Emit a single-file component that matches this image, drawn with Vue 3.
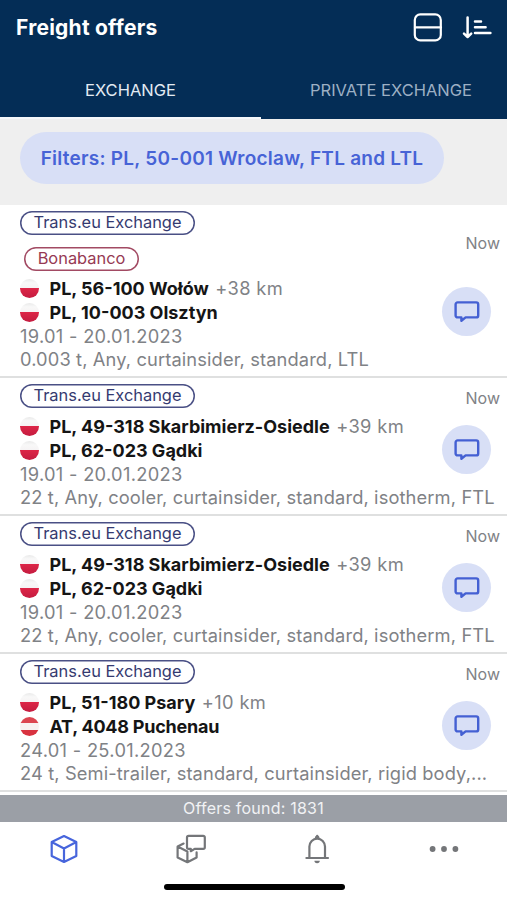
<template>
  <div class="screen">
    <header class="header">
      <div class="title-bar">
        <h1>Freight offers</h1>
        <div class="actions">
          <svg class="icon-layout" viewBox="0 0 30 30">
            <rect x="1.8" y="1.4" width="26" height="26" rx="5.5" />
            <path d="M2 14.4h26" />
          </svg>
          <svg class="icon-sort" viewBox="0 0 32 26">
            <path d="M7.6 2.5v18.6M4 18.6l3.6 3.4 3.6-3.4" />
            <path d="M15 6.4h6M15 12.2h10.6M15 18h15.4" />
          </svg>
        </div>
      </div>
      <div class="tabs">
        <button
          v-for="tab in tabs"
          :key="tab"
          :class="['tab', { active: tab === activeTab }]"
          @click="activeTab = tab"
        >{{ tab }}</button>
      </div>
    </header>

    <div class="filters">
      <button class="filter-chip"><span>Filters: PL, 50-001 Wroclaw, FTL and LTL</span></button>
    </div>

    <main class="offers">
      <article v-for="offer in offers" :key="offer.id" class="offer">
        <div class="offer-top">
          <div class="offer-main">
            <div class="badges">
              <span class="badge">Trans.eu Exchange</span>
              <span v-if="offer.company" class="badge company">{{ offer.company }}</span>
            </div>
            <div v-for="(place, i) in offer.places" :key="i" class="place">
              <span :class="['flag', place.country]"></span>
              <strong>{{ place.name }}</strong>
              <span v-if="place.distance" class="distance">{{ place.distance }}</span>
            </div>
            <div class="dates">{{ offer.dates }}</div>
          </div>
          <div class="offer-side">
            <span class="time">Now</span>
            <button class="chat" aria-label="Chat">
              <svg viewBox="0 0 26 24">
                <path d="M3.6 2.4h18.6a2 2 0 0 1 2 2v11a2 2 0 0 1-2 2H11.6L7.4 20.8v-3.4H3.6a2 2 0 0 1-2-2v-11a2 2 0 0 1 2-2z" />
              </svg>
            </button>
          </div>
        </div>
        <p class="details">{{ offer.details }}</p>
      </article>
    </main>

    <div class="summary"><span>Offers found: 1831</span></div>

    <nav class="bottom-nav">
      <div class="nav-items">
        <a class="nav-item active">
          <svg viewBox="0 0 30 30">
            <path d="M15 2l12.3 6.1v14L15 28 2.7 22.1v-14zM2.7 8.1L15 14.5l12.3-6.4M15 14.5V28" />
          </svg>
        </a>
        <a class="nav-item">
          <svg viewBox="0 0 30 30">
            <path d="M12.6 1.9h14.6a1.6 1.6 0 0 1 1.6 1.6v9.8a1.6 1.6 0 0 1-1.6 1.6H18.6l-3.8 2.3v-2.3h-2.2a1.6 1.6 0 0 1-1.6-1.6V3.5a1.6 1.6 0 0 1 1.6-1.6z" />
            <path d="M7.6 9.6L1.6 12.6v10.8l9.8 4.8 9.2-4.8v-5M1.6 12.6l9.8 4.8V28.2" />
          </svg>
        </a>
        <a class="nav-item">
          <svg viewBox="0 0 30 30">
            <path d="M4.4 24h21.6M7.4 24V12.6a7.8 8 0 0 1 15.6 0V24M15.2 4V1.8" />
            <path class="solid" d="M12.4 26.8h5.4a2.7 2.4 0 0 1-5.4 0zM12.8 4.6a2.4 3 0 0 1 4.8 0z" />
          </svg>
        </a>
        <a class="nav-item">
          <svg viewBox="0 0 30 30">
            <g class="solid">
              <circle cx="3.6" cy="15" r="2.9" />
              <circle cx="15" cy="15" r="2.9" />
              <circle cx="26.4" cy="15" r="2.9" />
            </g>
          </svg>
        </a>
      </div>
      <div class="home-indicator"></div>
    </nav>
  </div>
</template>

<script setup>
import { ref } from 'vue'

const tabs = ['EXCHANGE', 'PRIVATE EXCHANGE']
const activeTab = ref('EXCHANGE')

const offers = [
  {
    id: 1,
    company: 'Bonabanco',
    places: [
      { country: 'pl', name: 'PL, 56-100 Wołów', distance: '+38 km' },
      { country: 'pl', name: 'PL, 10-003 Olsztyn' }
    ],
    dates: '19.01 - 20.01.2023',
    details: '0.003 t, Any, curtainsider, standard, LTL'
  },
  {
    id: 2,
    places: [
      { country: 'pl', name: 'PL, 49-318 Skarbimierz-Osiedle', distance: '+39 km' },
      { country: 'pl', name: 'PL, 62-023 Gądki' }
    ],
    dates: '19.01 - 20.01.2023',
    details: '22 t, Any, cooler, curtainsider, standard, isotherm, FTL'
  },
  {
    id: 3,
    places: [
      { country: 'pl', name: 'PL, 49-318 Skarbimierz-Osiedle', distance: '+39 km' },
      { country: 'pl', name: 'PL, 62-023 Gądki' }
    ],
    dates: '19.01 - 20.01.2023',
    details: '22 t, Any, cooler, curtainsider, standard, isotherm, FTL'
  },
  {
    id: 4,
    places: [
      { country: 'pl', name: 'PL, 51-180 Psary', distance: '+10 km' },
      { country: 'at', name: 'AT, 4048 Puchenau' }
    ],
    dates: '24.01 - 25.01.2023',
    details: '24 t, Semi-trailer, standard, curtainsider, rigid body,...'
  }
]
</script>

<style>
body {
  background: #fff;
}
</style>

<style scoped>
.screen {
  width: 507px;
  height: 900px;
  display: flex;
  flex-direction: column;
  overflow: hidden;
  background: #fff;
  font-family: Inter, "Liberation Sans", sans-serif;
  color: #7f8286;
}

button {
  border: 0;
  padding: 0;
  background: none;
  font-family: inherit;
}

svg {
  display: block;
  fill: none;
  stroke: currentColor;
  stroke-width: 2.2;
  stroke-linecap: round;
  stroke-linejoin: round;
}

.header {
  height: 119px;
  flex: none;
  display: flex;
  flex-direction: column;
  background: #042d56;
  color: #fff;
}

.title-bar {
  height: 55px;
  padding: 0 15px 0 16px;
  display: flex;
  align-items: center;
  justify-content: space-between;
}

h1 {
  margin: 0;
  font-size: 21px;
  font-weight: 700;
  letter-spacing: 0.23px;
}

.actions {
  display: flex;
  align-items: center;
  gap: 17px;
}

.icon-layout {
  width: 30px;
  height: 30px;
}

.icon-sort {
  width: 32px;
  height: 26px;
  stroke-width: 2.5;
}

.tabs {
  flex: 1;
  display: grid;
  grid-template-columns: 261px 260px;
}

.tab {
  padding-top: 8px;
  font-size: 16.5px;
  color: #9db0c4;
  border-bottom: 2px solid transparent;
}

.tab.active {
  color: #e3ebf3;
  border-bottom-color: #f5f7fa;
}

.filters {
  height: 86px;
  flex: none;
  box-sizing: border-box;
  padding: 13px 20px 12px;
  background: #efefef;
}

.filter-chip {
  width: 424px;
  height: 52px;
  border-radius: 26px;
  background: #d8dff6;
  color: #4763d6;
  font-size: 19px;
  font-weight: 600;
  letter-spacing: 0.25px;
  white-space: nowrap;
}

.offers {
  flex: none;
  height: 590px;
}

.offer {
  box-sizing: border-box;
  padding: 6px 7px 5px 20px;
  border-bottom: 2px solid #dfe0e0;
}

.offer-top {
  display: flex;
  justify-content: space-between;
}

.badges {
  display: flex;
  flex-direction: column;
  align-items: flex-start;
  gap: 12px;
  margin-bottom: 6px;
}

.badge {
  width: 175px;
  height: 24px;
  line-height: 23.5px;
  box-shadow: inset 0 0 0 1.5px #4a5085;
  border-radius: 12px;
  color: #353a70;
  font-size: 16.4px;
  text-align: center;
  white-space: nowrap;
}

.badge.company {
  width: 115px;
  margin-left: 4px;
  margin-bottom: -1px;
  box-shadow: inset 0 0 0 1.5px #a24a63;
  color: #963953;
}

.place {
  display: flex;
  align-items: center;
  height: 24.5px;
  font-size: 18px;
  white-space: nowrap;
}

.place strong {
  margin-left: 10.5px;
  font-weight: 700;
  color: #151515;
}

.distance {
  margin-left: 6.5px;
  font-size: 18.3px;
  letter-spacing: 0.35px;
}

.flag {
  width: 19px;
  height: 19px;
  box-sizing: border-box;
  border-radius: 50%;
}

.flag.pl {
  background: linear-gradient(#e9e9e9, #f8f8f8 20%, #f6f3f4 48%, #dc2547 50%, #c41c40);
}

.flag.at {
  background: linear-gradient(#dc4550 34%, #f8f1f1 34%, #f8f1f1 66%, #d83340 66%);
}

.flag.at + strong {
  letter-spacing: -0.24px;
}

.dates,
.details {
  margin: 0;
  height: 23px;
  line-height: 23px;
  font-size: 18.3px;
  letter-spacing: 0.12px;
  white-space: nowrap;
}

.dates {
  letter-spacing: 0.3px;
}

.offer-side {
  display: flex;
  flex-direction: column;
  align-items: flex-end;
}

.time {
  flex: 1;
  display: flex;
  align-items: center;
  padding-bottom: 13px;
  font-size: 16px;
}

.chat {
  width: 49px;
  height: 49px;
  margin: 0 9px 12px 0;
  display: flex;
  align-items: center;
  justify-content: center;
  border-radius: 50%;
  background: #d8dff6;
  color: #4460d3;
}

.chat svg {
  width: 26px;
  height: 24px;
  stroke-width: 2.4;
}

.summary {
  height: 27px;
  flex: none;
  box-sizing: border-box;
  padding-bottom: 1px;
  display: flex;
  align-items: center;
  justify-content: center;
  background: #9b9fa6;
  color: #f1f2f4;
  font-size: 16px;
  letter-spacing: 0.22px;
}

.bottom-nav {
  flex: 1;
  display: flex;
  flex-direction: column;
  align-items: center;
}

.nav-items {
  width: 100%;
  height: 54px;
  display: grid;
  grid-template-columns: repeat(4, 1fr);
}

.nav-item {
  display: flex;
  align-items: center;
  justify-content: center;
  padding-left: 1px;
  color: #747679;
}

.nav-item.active {
  color: #4765dc;
}

.nav-item svg {
  width: 30px;
  height: 30px;
}

.solid {
  fill: currentColor;
  stroke: none;
}

.home-indicator {
  width: 181px;
  height: 6px;
  margin: 8px 0 0 1px;
  border-radius: 3px;
  background: #000;
}
</style>
